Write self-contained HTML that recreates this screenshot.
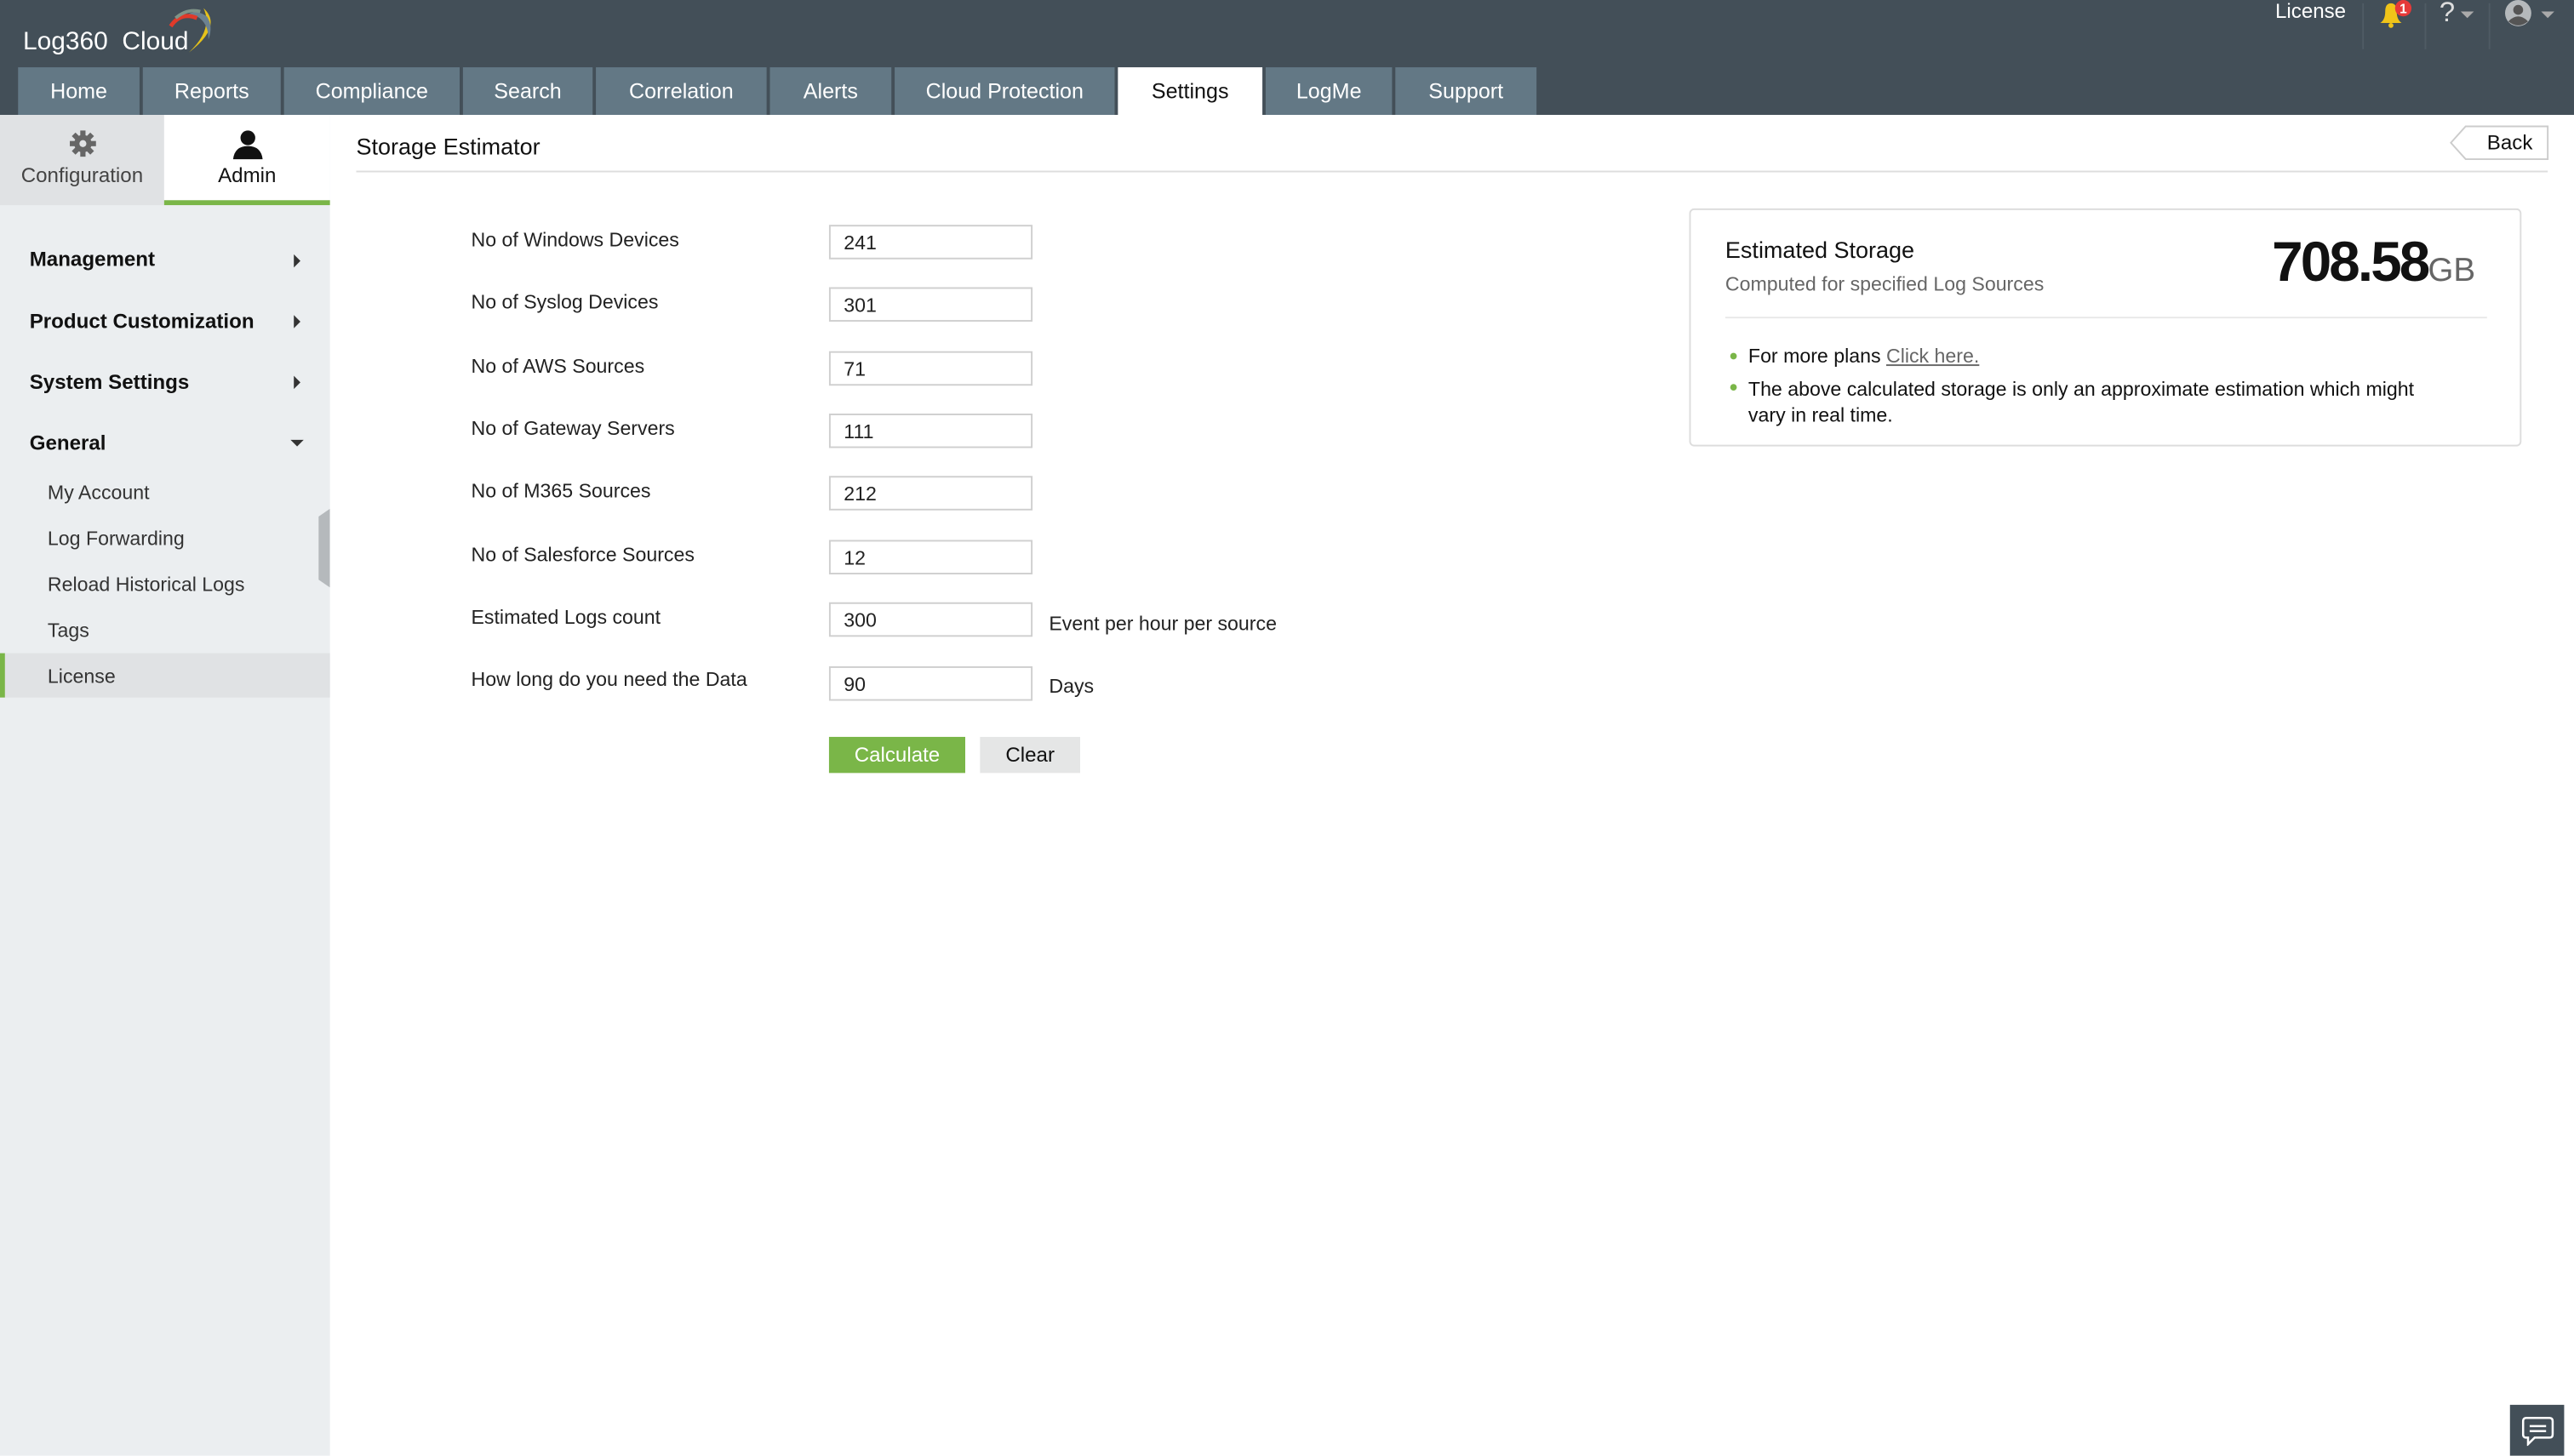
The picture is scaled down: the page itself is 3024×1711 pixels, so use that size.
<!DOCTYPE html>
<html><head><meta charset="utf-8">
<style>
html,body{margin:0;padding:0;width:3024px;height:1710px;overflow:hidden;background:#fff;}
#w{position:absolute;left:0;top:0;width:1568px;height:887px;transform:scale(1.928571);transform-origin:0 0;font-family:"Liberation Sans",sans-serif;color:#222;}
.a{position:absolute;}
.tab{position:absolute;top:41px;height:29px;background:#637885;color:#fff;font-size:13px;line-height:30px;text-align:center;}
.tab.on{background:#fff;color:#111;}
.lab{position:absolute;left:287px;font-size:12px;color:#222;}
.inp{position:absolute;left:505px;height:19px;border:1.5px solid #cfcfcf;font-size:12px;line-height:20px;padding-left:8px;box-sizing:content-box;width:114px;}
.side{position:absolute;left:18px;font-size:12.5px;font-weight:bold;color:#111;}
.sub{position:absolute;left:29px;font-size:12px;color:#333;}
.arr{position:absolute;left:179px;width:0;height:0;border-top:4px solid transparent;border-bottom:4px solid transparent;border-left:4px solid #333;}
</style></head><body><div id="w">
<div class="a" style="left:0;top:0;width:1568px;height:70px;background:#434f58;"></div>
<div class="a" style="left:14px;top:17px;color:#fff;font-size:15.5px;">Log360&nbsp; Cloud</div>
<svg class="a" style="left:100px;top:2px" width="34" height="32" viewBox="0 0 34 32"><path d="M24 3 Q36 14 15 30 Q30 16 24 3Z" fill="#e6c21a"/><path d="M10 10 Q18 2 26 8 Q30 14 27 22 Q27 12 20 8 Q14 6 10 10Z" fill="#6c8290"/><path d="M4 14 Q10 5 20 9" stroke="#e03a2a" stroke-width="2.5" fill="none"/><path d="M7 9 Q14 3 22 5" stroke="#7f9488" stroke-width="2" fill="none"/></svg>
<div class="a" style="left:1386px;top:0;color:#fff;font-size:12.5px;">License</div>
<div class="a" style="left:1439px;top:2px;width:1px;height:28px;background:#4f5b64;"></div>
<svg class="a" style="left:1448px;top:0" width="24" height="18"><path d="M2 14 Q5 12 5 7 Q5 2 8.5 2 Q12 2 12 7 Q12 12 15 14Z" fill="#f0c419"/><circle cx="8.5" cy="15.5" r="1.5" fill="#f0c419"/><circle cx="16" cy="5" r="5" fill="#e53939"/><text x="16" y="8" font-size="8" fill="#fff" font-weight="bold" text-anchor="middle" font-family="Liberation Sans">1</text></svg>
<div class="a" style="left:1477px;top:2px;width:1px;height:28px;background:#4f5b64;"></div>
<div class="a" style="left:1486px;top:-2px;color:#ddd;font-size:17px;">?</div>
<div class="a" style="left:1499px;top:7px;border-left:4px solid transparent;border-right:4px solid transparent;border-top:4px solid #aaa;"></div>
<div class="a" style="left:1516px;top:2px;width:1px;height:28px;background:#4f5b64;"></div>
<svg class="a" style="left:1525px;top:0" width="18" height="18"><circle cx="9" cy="8" r="8" fill="#b5b9bc"/><circle cx="9" cy="6" r="3" fill="#555"/><path d="M3 13 Q9 7 15 13 Q9 18 3 13Z" fill="#555"/></svg>
<div class="a" style="left:1548px;top:7px;border-left:4px solid transparent;border-right:4px solid transparent;border-top:4px solid #aaa;"></div>
<div class="tab" style="left:11px;width:74px">Home</div>
<div class="tab" style="left:87px;width:84px">Reports</div>
<div class="tab" style="left:173px;width:107px">Compliance</div>
<div class="tab" style="left:282px;width:79px">Search</div>
<div class="tab" style="left:363px;width:104px">Correlation</div>
<div class="tab" style="left:469px;width:74px">Alerts</div>
<div class="tab" style="left:545px;width:134px">Cloud Protection</div>
<div class="tab on" style="left:681px;width:88px">Settings</div>
<div class="tab" style="left:771px;width:77px">LogMe</div>
<div class="tab" style="left:850px;width:86px">Support</div>
<div class="a" style="left:0;top:70px;width:201px;height:817px;background:#ebeef0;"></div>
<div class="a" style="left:0;top:70px;width:100px;height:55px;background:#e0e2e4;"></div>
<div class="a" style="left:100px;top:70px;width:101px;height:52px;background:#fff;"></div>
<div class="a" style="left:100px;top:122px;width:101px;height:3px;background:#7ab648;"></div>
<svg class="a" style="left:42px;top:79px" width="17" height="17" viewBox="0 0 16 16"><g fill="#666"><circle cx="8" cy="8" r="5"/><rect x="6.5" y="0.5" width="3" height="15"/><rect x="0.5" y="6.5" width="15" height="3"/><rect x="6.5" y="0.5" width="3" height="15" transform="rotate(45 8 8)"/><rect x="6.5" y="0.5" width="3" height="15" transform="rotate(-45 8 8)"/></g><circle cx="8" cy="8" r="2" fill="#e0e2e4"/></svg>
<div class="a" style="left:0;top:100px;width:100px;text-align:center;font-size:12.5px;color:#444;">Configuration</div>
<svg class="a" style="left:141px;top:78px" width="20" height="20"><circle cx="10" cy="6" r="4.5" fill="#111"/><path d="M1 19 Q2 11 10 11 Q18 11 19 19Z" fill="#111"/></svg>
<div class="a" style="left:100px;top:100px;width:101px;text-align:center;font-size:12.5px;color:#111;">Admin</div>
<div class="side" style="top:151px">Management</div><div class="arr" style="top:155px"></div>
<div class="side" style="top:189px">Product Customization</div><div class="arr" style="top:192px"></div>
<div class="side" style="top:226px">System Settings</div><div class="arr" style="top:229px"></div>
<div class="side" style="top:263px">General</div><div class="a" style="left:177px;top:268px;border-left:4px solid transparent;border-right:4px solid transparent;border-top:4px solid #333;"></div>
<div class="sub" style="top:293px">My Account</div>
<div class="sub" style="top:321px">Log Forwarding</div>
<div class="sub" style="top:349px">Reload Historical Logs</div>
<div class="sub" style="top:377px">Tags</div>
<div class="a" style="left:0;top:398px;width:201px;height:27px;background:#e0e2e4;"></div>
<div class="a" style="left:0;top:398px;width:3px;height:27px;background:#7ab648;"></div>
<div class="sub" style="top:405px">License</div>
<div class="a" style="left:194px;top:310px;width:7px;height:48px;background:#b5b9bc;clip-path:polygon(100% 0,100% 100%,0 90%,0 10%);"></div>
<div class="a" style="left:217px;top:81px;font-size:14px;color:#111;">Storage Estimator</div>
<div class="a" style="left:217px;top:104px;width:1335px;height:1px;background:#ddd;"></div>
<svg class="a" style="left:1492px;top:76px" width="61" height="22"><path d="M10 1 H60 V21 H10 L1 11Z" fill="#fff" stroke="#ccc"/></svg>
<div class="a" style="left:1515px;top:80px;font-size:12.5px;color:#111;">Back</div>
<div class="lab" style="top:139px">No of Windows Devices</div><div class="inp" style="top:137px">241</div>
<div class="lab" style="top:177px">No of Syslog Devices</div><div class="inp" style="top:175px">301</div>
<div class="lab" style="top:216px">No of AWS Sources</div><div class="inp" style="top:214px">71</div>
<div class="lab" style="top:254px">No of Gateway Servers</div><div class="inp" style="top:252px">111</div>
<div class="lab" style="top:292px">No of M365 Sources</div><div class="inp" style="top:290px">212</div>
<div class="lab" style="top:331px">No of Salesforce Sources</div><div class="inp" style="top:329px">12</div>
<div class="lab" style="top:369px">Estimated Logs count</div><div class="inp" style="top:367px">300</div>
<div class="lab" style="left:639px;top:373px">Event per hour per source</div>
<div class="lab" style="top:407px">How long do you need the Data</div><div class="inp" style="top:406px">90</div>
<div class="lab" style="left:639px;top:411px">Days</div>
<div class="a" style="left:505px;top:449px;width:83px;height:22px;background:#7ab648;color:#fff;font-size:12.5px;line-height:23px;text-align:center;">Calculate</div>
<div class="a" style="left:597px;top:449px;width:61px;height:22px;background:#e5e6e6;color:#111;font-size:12.5px;line-height:23px;text-align:center;">Clear</div>
<div class="a" style="left:1029px;top:127px;width:507px;height:145px;border:1px solid #ddd;border-radius:3px;box-sizing:border-box;"></div>
<div class="a" style="left:1051px;top:144px;font-size:14px;color:#111;">Estimated Storage</div>
<div class="a" style="left:1051px;top:166px;font-size:12px;color:#666;">Computed for specified Log Sources</div>
<div class="a" style="left:1384px;top:141px;font-size:34px;font-weight:bold;color:#111;letter-spacing:-1.5px;">708.58<span style="font-size:20px;font-weight:normal;color:#666;letter-spacing:0">GB</span></div>
<div class="a" style="left:1051px;top:193px;width:464px;height:1px;background:#e8e8e8;"></div>
<div class="a" style="left:1054px;top:215px;width:4px;height:4px;border-radius:2px;background:#7ab648;"></div>
<div class="a" style="left:1065px;top:210px;font-size:12px;color:#111;">For more plans <span style="color:#666;text-decoration:underline">Click here.</span></div>
<div class="a" style="left:1054px;top:234px;width:4px;height:4px;border-radius:2px;background:#7ab648;"></div>
<div class="a" style="left:1065px;top:229px;width:430px;font-size:12px;line-height:16px;color:#111;">The above calculated storage is only an approximate estimation which might vary in real time.</div>
<div class="a" style="left:1529px;top:856px;width:33px;height:31px;background:#434f58;"></div>
<svg class="a" style="left:1536px;top:863px" width="20" height="18"><path d="M3 1 H17 Q19 1 19 3 V11 Q19 13 17 13 H8 L4 17 V13 H3 Q1 13 1 11 V3 Q1 1 3 1Z" fill="none" stroke="#fff" stroke-width="1.3"/><line x1="5" y1="6" x2="15" y2="6" stroke="#fff" stroke-width="1.3"/><line x1="5" y1="9" x2="15" y2="9" stroke="#fff" stroke-width="1.3"/></svg>
</div></body></html>
